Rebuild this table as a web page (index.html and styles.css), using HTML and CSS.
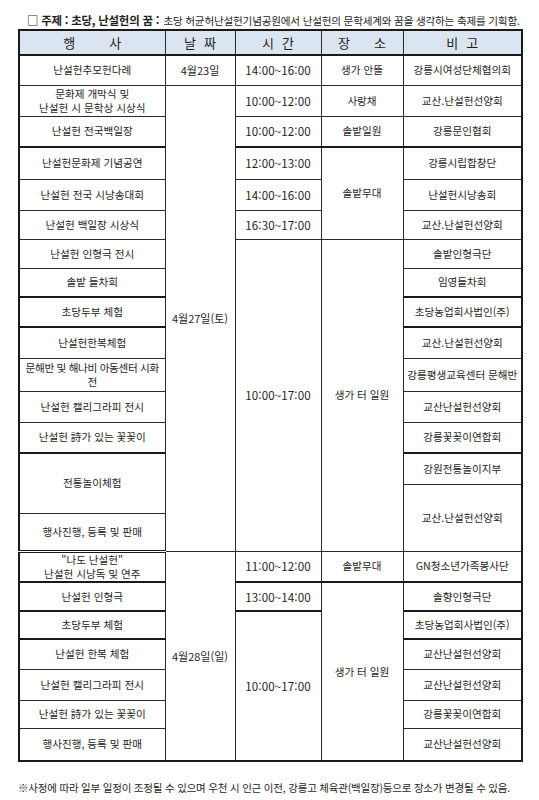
FILE: index.html
```html
<!DOCTYPE html>
<html lang="ko">
<head>
<meta charset="utf-8">
<link rel="stylesheet" href="styles.css">
</head>
<body>
<div class="page">
  <p class="title"><span class="tb">□ 주제 : 초당, 난설헌의 꿈 :</span> <span class="tr">초당 허균허난설헌기념공원에서 난설헌의 문학세계와 꿈을 생각하는 축제를 기획함.</span></p>
  <table class="sched">
    <colgroup>
      <col class="c1"><col class="c2"><col class="c3"><col class="c4"><col class="c5">
    </colgroup>
    <thead>
      <tr class="hd">
        <th><span class="sp1">행</span>사</th>
        <th><span class="sp2">날</span>짜</th>
        <th><span class="sp2">시</span>간</th>
        <th><span class="sp3">장</span>소</th>
        <th><span class="sp2">비</span>고</th>
      </tr>
    </thead>
    <tbody>
      <tr class="h30">
        <td>난설헌추모헌다례</td><td class="dt">4월23일</td><td class="tm">14:00~16:00</td><td>생가 안뜰</td><td>강릉시여성단체협의회</td>
      </tr>
      <tr class="h31">
        <td>문화제 개막식 및<br>난설헌 시 문학상 시상식</td><td class="dt" rowspan="15">4월27일(토)</td><td class="tm">10:00~12:00</td><td>사랑채</td><td>교산.난설헌선양회</td>
      </tr>
      <tr class="h31 bb">
        <td>난설헌 전국백일장</td><td class="tm">10:00~12:00</td><td>솔밭일원</td><td>강릉문인협회</td>
      </tr>
      <tr class="h32">
        <td>난설헌문화제 기념공연</td><td class="tm">12:00~13:00</td><td rowspan="3">솔밭무대</td><td>강릉시립합창단</td>
      </tr>
      <tr class="h31">
        <td>난설헌 전국 시낭송대회</td><td class="tm">14:00~16:00</td><td>난설헌시낭송회</td>
      </tr>
      <tr class="h29">
        <td>난설헌 백일장 시상식</td><td class="tm">16:30~17:00</td><td>교산.난설헌선양회</td>
      </tr>
      <tr class="h29">
        <td>난설헌 인형극 전시</td><td class="tm" rowspan="10">10:00~17:00</td><td rowspan="10">생가 터 일원</td><td>솔밭인형극단</td>
      </tr>
      <tr class="h29 bb">
        <td>솔밭 들차회</td><td>임영들차회</td>
      </tr>
      <tr class="h30 bb">
        <td>초당두부 체험</td><td>초당농업회사법인(주)</td>
      </tr>
      <tr class="h31">
        <td>난설헌한복체험</td><td>교산.난설헌선양회</td>
      </tr>
      <tr class="h33">
        <td class="tight">문해반 및 해나비 아동센터 시화전</td><td>강릉평생교육센터 문해반</td>
      </tr>
      <tr class="h31">
        <td>난설헌 캘리그라피 전시</td><td>교산난설헌선양회</td>
      </tr>
      <tr class="h31 bb">
        <td>난설헌 詩가 있는 꽃꽂이</td><td>강릉꽃꽂이연합회</td>
      </tr>
      <tr class="h31">
        <td rowspan="2">전통놀이체험</td><td>강원전통놀이지부</td>
      </tr>
      <tr class="h29">
        <td rowspan="2">교산.난설헌선양회</td>
      </tr>
      <tr class="h38 day">
        <td>행사진행, 등록 및 판매</td>
      </tr>
      <tr class="h31 bb">
        <td>"나도 난설헌"<br>난설헌 시낭독 및 연주</td><td class="dt" rowspan="7">4월28일(일)</td><td class="tm">11:00~12:00</td><td>솔밭무대</td><td>GN청소년가족봉사단</td>
      </tr>
      <tr class="h29 bb">
        <td>난설헌 인형극</td><td class="tm">13:00~14:00</td><td rowspan="6">생가 터 일원</td><td>솔향인형극단</td>
      </tr>
      <tr class="h28 bb">
        <td>초당두부 체험</td><td class="tm" rowspan="5">10:00~17:00</td><td>초당농업회사법인(주)</td>
      </tr>
      <tr class="h30">
        <td>난설헌 한복 체험</td><td>교산난설헌선양회</td>
      </tr>
      <tr class="h31">
        <td>난설헌 캘리그라피 전시</td><td>교산난설헌선양회</td>
      </tr>
      <tr class="h28">
        <td>난설헌 詩가 있는 꽃꽂이</td><td>강릉꽃꽂이연합회</td>
      </tr>
      <tr class="h33">
        <td>행사진행, 등록 및 판매</td><td>교산난설헌선양회</td>
      </tr>
    </tbody>
  </table>
  <p class="note">※사정에 따라 일부 일정이 조정될 수 있으며 우천 시 인근 이전, 강릉고 체육관(백일장)등으로 장소가 변경될 수 있음.</p>
</div>
</body>
</html>
```

FILE: styles.css
```css
html, body {
  margin: 0;
  padding: 0;
  background: #ffffff;
}
body {
  font-family: "Noto Sans CJK KR", "Noto Sans", sans-serif;
  color: #1e1e1e;
}
.page {
  width: 539px;
  padding: 10px 0 0 18px;
  box-sizing: border-box;
}
.title {
  margin: 0 0 0 9px;
  height: 19px;
  line-height: 16px;
  white-space: nowrap;
  letter-spacing: -0.2px;
}
.tb {
  font-weight: 700;
  font-size: 11.4px;
}
.tr {
  font-size: 10.6px;
}
.sched {
  border-collapse: collapse;
  table-layout: fixed;
  width: 503px;
  border: 2px solid #1a1a1a;
}
.c1 { width: 146px; }
.c2 { width: 70px; }
.c3 { width: 86px; }
.c4 { width: 82px; }
.c5 { width: 119px; }
.sched th, .sched td {
  border: 1px solid #2a2a2a;
  padding: 0 1px;
  text-align: center;
  vertical-align: middle;
  font-size: 10.6px;
  line-height: 14px;
  font-weight: 400;
  overflow: hidden;
}
.sched td.tm {
  font-size: 11.6px;
  letter-spacing: 0.1px;
}
.sched td.dt {
  font-size: 11px;
}
.sched th {
  background: #dbe5f1;
  font-size: 13px;
  height: 23px;
  border-bottom: 2px solid #1a1a1a;
}
.sp1 { margin-right: 34px; }
.sp2 { margin-right: 8px; }
.sp3 { margin-right: 24px; }
.tight { letter-spacing: -0.3px; }
.bb td { border-bottom: 2px solid #1a1a1a; }
.day td { border-bottom: 3px double #1a1a1a; }
.h28 { height: 28px; }
.h29 { height: 29px; }
.h30 { height: 30px; }
.h31 { height: 31px; }
.h32 { height: 32px; }
.h33 { height: 33px; }
.h38 { height: 38px; }
.note {
  margin: 18px 0 0 0;
  font-size: 10.5px;
  letter-spacing: -0.2px;
  white-space: nowrap;
}
```
